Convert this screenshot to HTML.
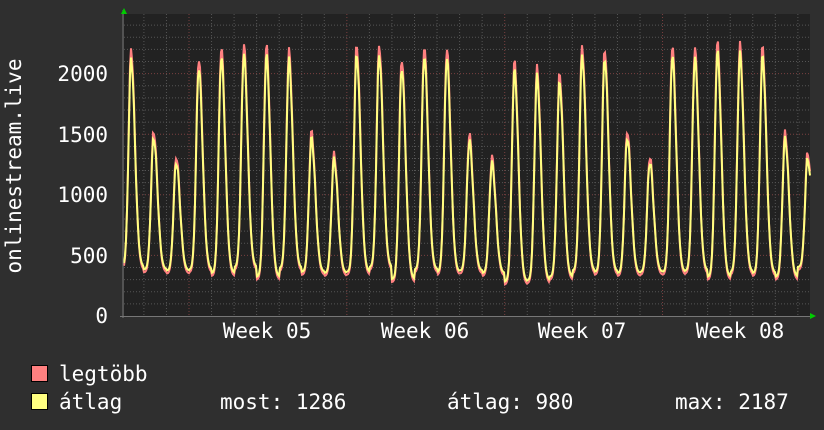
<!DOCTYPE html>
<html><head><meta charset="utf-8"><style>
html,body{margin:0;padding:0;background:#2f2f2f;}
body{width:824px;height:430px;overflow:hidden;position:relative;font-family:"DejaVu Sans Mono","Liberation Mono",monospace;color:#fff;}
</style></head><body>
<svg id="s" width="824" height="430" xmlns="http://www.w3.org/2000/svg" style="position:absolute;left:0;top:0">
<rect x="124" y="14" width="686" height="302" fill="#222"/>
<g id="grid"></g>
<path id="pmax" fill="none" stroke="#ff8080" stroke-width="2"/>
<path id="pavg" fill="none" stroke="#ffff80" stroke-width="2"/>
<line x1="123" y1="10" x2="123" y2="318" stroke="#777" stroke-width="1"/>
<line x1="120" y1="316.5" x2="812" y2="316.5" stroke="#777" stroke-width="1"/>
<polygon points="121,14 124,8 127,14" fill="#0c0"/>
<polygon points="810,313 816,316 810,319" fill="#0c0"/>
<g font-family="DejaVu Sans Mono, Liberation Mono, monospace" font-size="21" fill="#fff">
<text x="108" y="81" text-anchor="end">2000</text>
<text x="108" y="142" text-anchor="end">1500</text>
<text x="108" y="202" text-anchor="end">1000</text>
<text x="108" y="263" text-anchor="end">500</text>
<text x="108" y="323" text-anchor="end">0</text>
<text x="267" y="338" text-anchor="middle">Week 05</text>
<text x="425" y="338" text-anchor="middle">Week 06</text>
<text x="582" y="338" text-anchor="middle">Week 07</text>
<text x="740" y="338" text-anchor="middle">Week 08</text>
<text transform="translate(21,166) rotate(-90)" text-anchor="middle">onlinestream.live</text>
<text x="59" y="381">legtöbb</text>
<text x="59" y="409">átlag</text>
<text x="220" y="409">most: 1286</text>
<text x="447" y="409">átlag: 980</text>
<text x="675" y="409">max: 2187</text>
</g>
<rect x="31.5" y="365.5" width="16" height="16" fill="#ff8080" stroke="#000"/>
<rect x="31.5" y="393.5" width="16" height="16" fill="#ffff80" stroke="#000"/>
</svg>
<script>
var g=document.getElementById('grid'),h='';
for(var v=100;v<=2400;v+=100){var y=316-v*0.1212;var maj=v%500==0;
h+='<line x1="124" x2="810" y1="'+y+'" y2="'+y+'" stroke="'+(maj?'#7a4040':'#555')+'" stroke-dasharray="1,2"/>';}
for(var k=-2;k<32;k++){var x=189+k*22.55;if(x<125||x>809)continue;var maj=((k%7)+7)%7==0;
h+='<line y1="14" y2="316" x1="'+x+'" x2="'+x+'" stroke="'+(maj?'#7a4040':'#555')+'" stroke-dasharray="1,2"/>';}
g.innerHTML=h;
var pk=[2200,1530,1320,2130,2220,2240,2230,2190,1520,1340,2240,2240,2130,2230,2210,1500,1310,2100,2050,2000,2230,2210,1530,1320,2230,2210,2260,2240,2220,1520,1350,1300];
var tr=[380,360,350,360,330,380,300,370,340,330,340,380,280,360,340,350,330,260,270,300,350,340,330,340,340,350,300,340,330,300,380,400];
function path(sc,off){var d='';for(var x=124;x<=810;x+=1){var t=(x-121.4)/22.55;var i=Math.floor(t);var p=t-i;
var c=0.43,dx=p-c;var w=dx<0?0.2:0.3;var b=Math.exp(-Math.pow(dx/w,2)*1.6);
var P=pk[i]*sc,T=tr[i]+off;var n=Math.sin(x*1.7)*30;var v=T+(P-T)*b+n*b;
var y=316-v*0.1212;d+=(x==124?'M':'L')+x+','+y.toFixed(1);}return d;}
document.getElementById('pmax').setAttribute('d',path(1,0));
document.getElementById('pavg').setAttribute('d',path(0.965,25));
</script>
</body></html>
